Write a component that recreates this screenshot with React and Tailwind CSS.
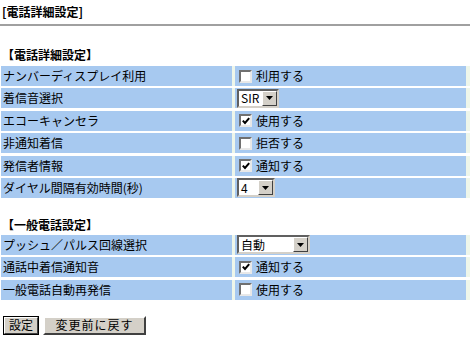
import React from 'react';

const font = { fontFamily: '"MS UI Gothic", "Noto Sans CJK JP", sans-serif' };

function CheckBox({ checked }) {
  return (
    <span className="inline-flex w-[13px] h-[13px] border-2 border-t-[#707070] border-l-[#707070] border-r-[#e8e8e8] border-b-[#e8e8e8] bg-white items-center justify-center shrink-0">
      {checked && (
        <svg width="8" height="8" viewBox="0 0 8 8">
          <path d="M0.8 3.6 L3 6 L7.2 1.2" stroke="#000" strokeWidth="2" fill="none" />
        </svg>
      )}
    </span>
  );
}

function Select({ value, width }) {
  return (
    <span
      className={`inline-flex h-[19px] bg-white border-2 border-t-[#606060] border-l-[#606060] border-r-[#d4d0c8] border-b-[#d4d0c8] items-center ${width}`}
    >
      <span className="flex-1 pl-[2px] text-[12px] leading-[14px]">{value}</span>
      <span className="w-[15px] h-[15px] bg-[#d4d0c8] border border-t-white border-l-white border-r-[#404040] border-b-[#404040] flex items-center justify-center">
        <svg width="7" height="4" viewBox="0 0 7 4">
          <path d="M0 0 H7 L3.5 4 Z" fill="#000" />
        </svg>
      </span>
    </span>
  );
}

function Row({ label, children }) {
  return (
    <div className="flex h-[20px] bg-[#eef6ea]">
      <div className="w-[231px] bg-[#a7c9f0] pl-[2px] flex items-center text-[12px] leading-[14px]">{label}</div>
      <div className="w-[3px]" />
      <div className="w-[231px] bg-[#a7c9f0] pl-[2px] flex items-center gap-[4px] text-[12px] leading-[14px]">
        {children}
      </div>
    </div>
  );
}

function Check({ checked, text }) {
  return (
    <>
      <span className="pl-[2px] flex"><CheckBox checked={checked} /></span>
      <span>{text}</span>
    </>
  );
}

export default function App() {
  return (
    <div className="w-[470px] h-[345px] bg-white text-black overflow-hidden" style={font}>
      <div className="pt-[5px] pl-[2px] font-bold text-[12px] leading-[14px]">[電話詳細設定]</div>
      <div className="mt-[5px] h-[2px] bg-[#a0a0a0]" />

      <div className="mt-[22px] pl-[2px] font-bold text-[12px] leading-[14px]">【電話詳細設定】</div>
      <div className="mt-[4px] ml-[1px] flex flex-col gap-y-[2.4px]">
        <Row label="ナンバーディスプレイ利用"><Check text="利用する" /></Row>
        <Row label="着信音選択"><Select value="SIR" width="w-[42px]" /></Row>
        <Row label="エコーキャンセラ"><Check checked text="使用する" /></Row>
        <Row label="非通知着信"><Check text="拒否する" /></Row>
        <Row label="発信者情報"><Check checked text="通知する" /></Row>
        <Row label="ダイヤル間隔有効時間(秒)"><Select value="4" width="w-[38px]" /></Row>
      </div>

      <div className="mt-[20px] pl-[2px] font-bold text-[12px] leading-[14px]">【一般電話設定】</div>
      <div className="mt-[3px] ml-[1px] flex flex-col gap-y-[2.4px]">
        <Row label="プッシュ／パルス回線選択"><Select value="自動" width="w-[73px]" /></Row>
        <Row label="通話中着信通知音"><Check checked text="通知する" /></Row>
        <Row label="一般電話自動再発信"><Check text="使用する" /></Row>
      </div>

      <div className="mt-[16px] ml-[3px] flex gap-[4px]">
        <button className="w-[36px] h-[19px] border border-black bg-[#d4d0c8] p-0">
          <span className="flex h-full items-center justify-center border border-t-white border-l-white border-r-[#404040] border-b-[#404040] text-[12px] leading-[14px]">設定</span>
        </button>
        <button className="w-[103px] h-[19px] bg-[#d4d0c8] border-2 border-t-white border-l-white border-r-[#404040] border-b-[#404040] text-[12px] leading-[14px] tracking-[1px] p-0">
          変更前に戻す
        </button>
      </div>
    </div>
  );
}
